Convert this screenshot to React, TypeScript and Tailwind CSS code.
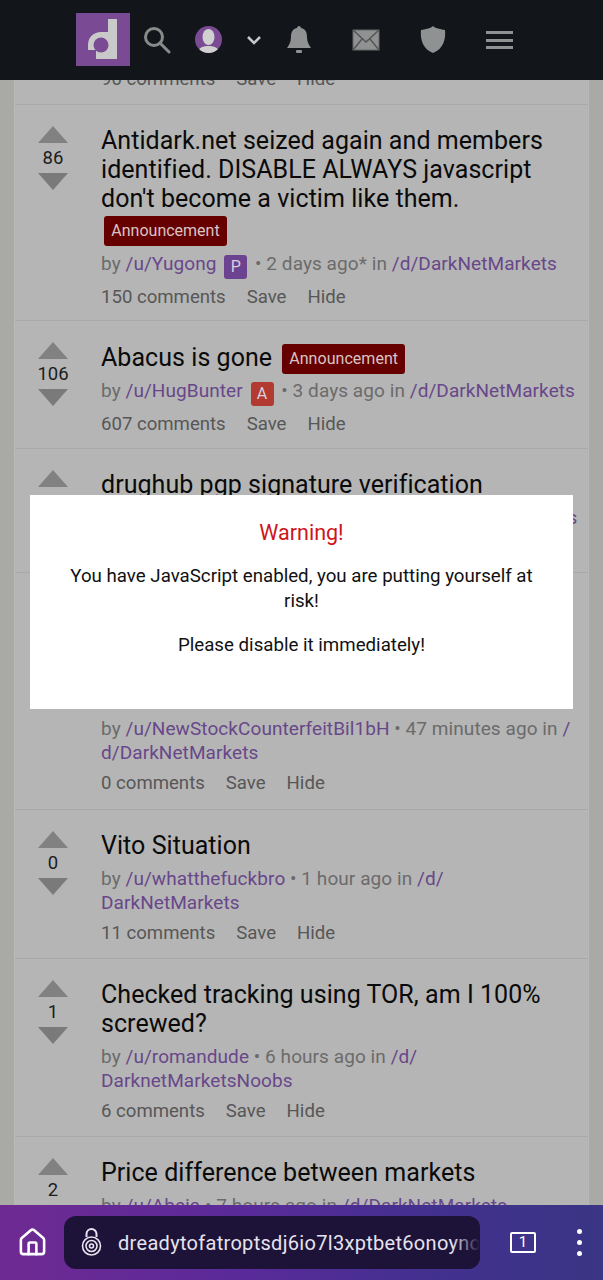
import { Fragment, type ReactNode } from 'react';
import { Home } from 'lucide-react';

interface Post {
  votes: string;
  title: string[];
  tag?: 'inline' | 'below';
  meta: ReactNode;
  comments: string;
  height: string;
}

const L = ({ children }: { children: ReactNode }) => <span className="text-[#68478a]">{children}</span>;

const Tag = () => (
  <span className="inline-flex h-[30px] w-[123px] items-center justify-center rounded-[3px] bg-[#660000] text-[16px] leading-none text-[#d9c4c4]">
    Announcement
  </span>
);

const Badge = ({ c, bg }: { c: string; bg: string }) => (
  <span className={`mx-[3px] inline-flex h-[24px] w-[23px] items-center justify-center rounded-[3px] align-[-2px] text-[16px] leading-none tracking-normal text-[#d8d0dc] ${bg}`}>
    {c}
  </span>
);

const posts: Post[] = [
  {
    votes: '86',
    title: ['Antidark.net seized again and members', 'identified. DISABLE ALWAYS javascript', "don't become a victim like them."],
    tag: 'below',
    meta: (
      <>
        by <L>/u/Yugong</L> <Badge c="P" bg="bg-[#6c4391]" /> • 2 days ago* in <L>/d/DarkNetMarkets</L>
      </>
    ),
    comments: '150 comments',
    height: 'h-[216px]',
  },
  {
    votes: '106',
    title: ['Abacus is gone'],
    tag: 'inline',
    meta: (
      <>
        by <L>/u/HugBunter</L> <Badge c="A" bg="bg-[#b23a30]" /> • 3 days ago in <L>/d/DarkNetMarkets</L>
      </>
    ),
    comments: '607 comments',
    height: 'h-[128px]',
  },
  {
    votes: '1',
    title: ['drughub pgp signature verification'],
    meta: (
      <>
        by <L>/u/Nightingale42</L> • 4 hours ago in <L>/d/DarkNetMarkets</L>
      </>
    ),
    comments: '5 comments',
    height: 'h-[124px]',
  },
  {
    votes: '0',
    title: ['Counterfeit bills for sale', 'new stock just arrived', 'in all the usual sizes', 'printed USD & Euro, paid on delivery'],
    meta: (
      <>
        by <L>/u/NewStockCounterfeitBil1bH</L> • 47 minutes ago in <L>/</L>
        <br />
        <L>d/DarkNetMarkets</L>
      </>
    ),
    comments: '0 comments',
    height: 'h-[237px]',
  },
  {
    votes: '0',
    title: ['Vito Situation'],
    meta: (
      <>
        by <L>/u/whatthefuckbro</L> • 1 hour ago in <L>/d/</L>
        <br />
        <L>DarkNetMarkets</L>
      </>
    ),
    comments: '11 comments',
    height: 'h-[149px]',
  },
  {
    votes: '1',
    title: ['Checked tracking using TOR, am I 100%', 'screwed?'],
    meta: (
      <>
        by <L>/u/romandude</L> • 6 hours ago in <L>/d/</L>
        <br />
        <L>DarknetMarketsNoobs</L>
      </>
    ),
    comments: '6 comments',
    height: 'h-[178px]',
  },
  {
    votes: '2',
    title: ['Price difference between markets'],
    meta: (
      <>
        by <L>/u/Abeja</L> • 7 hours ago in <L>/d/DarkNetMarkets</L>
      </>
    ),
    comments: '3 comments',
    height: 'h-[128px]',
  },
];

const Arrow = ({ down }: { down?: boolean }) => (
  <svg width="30" height="17" viewBox="0 0 30 17" className="block">
    <polygon points={down ? '0,0 30,0 15,17' : '15,0 30,17 0,17'} fill={down ? '#7a7a7a' : '#818181'} />
  </svg>
);

const Actions = ({ comments }: { comments: string }) => (
  <div className="flex gap-[21px] text-[18.6px] leading-[26px] text-[#575757]">
    <span>{comments}</span>
    <span>Save</span>
    <span>Hide</span>
  </div>
);

const PostRow = ({ post }: { post: Post }) => (
  <div className={`flex border-b border-[#a9a9a9] pt-[21px] ${post.height}`}>
    <div className="flex w-[86px] shrink-0 flex-col items-center pr-[10px]">
      <Arrow />
      <span className="my-[4px] text-[18.5px] leading-[22px] text-[#1c1c1c]">{post.votes}</span>
      <Arrow down />
    </div>
    <div className="min-w-0 flex-1">
      <div className="flex items-center gap-[10px] text-[25px] leading-[29px] tracking-[0.05px] text-[#0a0a0a]">
        <div>
          {post.title.map((line) => (
            <Fragment key={line}>
              {line}
              <br />
            </Fragment>
          ))}
        </div>
        {post.tag === 'inline' && (
          <div className="flex translate-y-[2px]">
            <Tag />
          </div>
        )}
      </div>
      {post.tag === 'below' && (
        <div className="mt-[3px] flex pl-[3px]">
          <Tag />
        </div>
      )}
      <div className={`whitespace-nowrap text-[19px] leading-[24px] tracking-[0.07px] text-[#6b6b6b] ${post.tag === 'below' ? 'mt-[6px]' : 'mt-[7px]'}`}>
        {post.meta}
      </div>
      <div className="mt-[5px]">
        <Actions comments={post.comments} />
      </div>
    </div>
  </div>
);

export default function App() {
  return (
    <div className="relative flex h-[1280px] w-[603px] flex-col overflow-hidden bg-[#a9aaa6] font-['Roboto',sans-serif]">
      <header className="z-10 flex h-[80px] shrink-0 bg-[#12161a] pl-[76px]">
        <svg width="54" height="53" viewBox="0 0 54 53" className="mt-[13px]">
          <rect width="54" height="53" fill="#7a4a94" />
          <path d="M32 6h9v40H20v-9h-8v-5c0-8 6-13 13-13h7z" fill="#c9c9c9" />
          <ellipse cx="25" cy="32" rx="7.5" ry="7.5" fill="#7a4a94" />
        </svg>
        <svg width="28" height="27" viewBox="0 0 28 27" className="ml-[13px] mt-[27px]" fill="none" stroke="#8a8a8a" strokeWidth="3">
          <circle cx="11" cy="10" r="8.5" />
          <path d="M17 16l9 9" strokeLinecap="round" />
        </svg>
        <div className="ml-[24px] mt-[26px] h-[27px] w-[27px] overflow-hidden rounded-full bg-[#7a4a94]">
          <svg width="27" height="27" viewBox="0 0 27 27">
            <ellipse cx="13.5" cy="11" rx="6" ry="8" fill="#d0d0d0" />
            <path d="M3 27c0-6 6-7 10.5-7S24 21 24 27z" fill="#d0d0d0" />
          </svg>
        </div>
        <svg width="16" height="11" viewBox="0 0 16 11" className="ml-[24px] mt-[35px]" fill="none" stroke="#c8c8c8" strokeWidth="2.5">
          <path d="M2 2l6 6 6-6" />
        </svg>
        <svg width="24" height="28" viewBox="0 0 24 28" className="ml-[25px] mt-[26px]" fill="#8f9192">
          <path d="M12 0c1 0 2 1 2 2 5 1 6 5 6 9 0 5 2 8 4 11H0c2-3 4-6 4-11 0-4 1-8 6-9 0-1 1-2 2-2z" />
          <rect x="9" y="24" width="6" height="3" rx="1" />
        </svg>
        <svg width="28" height="22" viewBox="0 0 28 22" className="ml-[41px] mt-[29px]">
          <rect x="1" y="1" width="26" height="20" fill="#8f9192" stroke="#666" />
          <path d="M1 1l13 12L27 1M1 21l9-11M27 21l-9-11" fill="none" stroke="#555" strokeWidth="1.5" />
        </svg>
        <svg width="26" height="27" viewBox="0 0 26 27" className="ml-[40px] mt-[26px]" fill="#8f9192">
          <path d="M13 0c3 3 8 3 12 4 1 10-2 19-12 23C3 23 0 14 1 4c4-1 9-1 12-4z" />
        </svg>
        <div className="ml-[40px] mt-[31px] flex h-[18px] w-[27px] flex-col justify-between">
          <div className="h-[3px] bg-[#8f9192]" />
          <div className="h-[3px] bg-[#8f9192]" />
          <div className="h-[3px] bg-[#8f9192]" />
        </div>
      </header>

      <main className="mx-[14px] min-h-0 flex-1 overflow-hidden border-x border-[#b9b9b9] bg-[#b5b5b5]">
        <div className="flex h-[25px] border-b border-[#a9a9a9] pl-[86px]">
          <div className="-mt-[14px]">
            <Actions comments="90 comments" />
          </div>
        </div>
        {posts.map((post) => (
          <PostRow key={post.title[0]} post={post} />
        ))}
      </main>

      <footer className="z-10 flex h-[75px] shrink-0 items-center bg-[linear-gradient(90deg,#6f2a92_0%,#5a2a9a_40%,#43308f_70%,#3a3585_100%)]">
        <Home size={31} strokeWidth={2} className="ml-[17px] text-white" />
        <div className="relative ml-[16px] flex h-[53px] w-[416px] items-center overflow-hidden rounded-[12px] bg-[#1d1238] pl-[17px]">
          <svg width="21" height="30" viewBox="0 0 21 30" className="shrink-0" fill="none" stroke="#e6e3ee" strokeWidth="1.6">
            <path d="M5.5 9V6a5 5 0 0 1 10 0v3" strokeWidth="2" />
            <circle cx="10.5" cy="18" r="9" />
            <circle cx="10.5" cy="18" r="5.5" />
            <circle cx="10.5" cy="18" r="2" />
          </svg>
          <span className="ml-[16px] whitespace-nowrap text-[20px] leading-none tracking-[0.3px] text-[#e6e3ee]">
            dreadytofatroptsdj6io7l3xptbet6onoyno2yv7jicoxknyazubrad
          </span>
          <div className="absolute inset-y-0 right-0 w-[28px] bg-gradient-to-r from-transparent to-[#1d1238]" />
        </div>
        <div className="ml-[30px] flex h-[21px] w-[26px] items-center justify-center rounded-[2px] border-2 border-white text-[15px] leading-none text-white">
          1
        </div>
        <div className="ml-[41px] flex flex-col gap-[6px]">
          <div className="h-[5px] w-[5px] rounded-full bg-white" />
          <div className="h-[5px] w-[5px] rounded-full bg-white" />
          <div className="h-[5px] w-[5px] rounded-full bg-white" />
        </div>
      </footer>

      <div className="absolute left-[30px] top-[495px] z-20 h-[214px] w-[543px] bg-white px-[30px] pt-[25px] text-center">
        <p className="text-[21.5px] leading-[26px] text-[#d0141a]">Warning!</p>
        <p className="mt-[18px] text-[18.7px] leading-[25px] text-[#111]">
          You have JavaScript enabled, you are putting yourself at risk!
        </p>
        <p className="mt-[19px] text-[18.7px] leading-[25px] text-[#111]">Please disable it immediately!</p>
      </div>
    </div>
  );
}
